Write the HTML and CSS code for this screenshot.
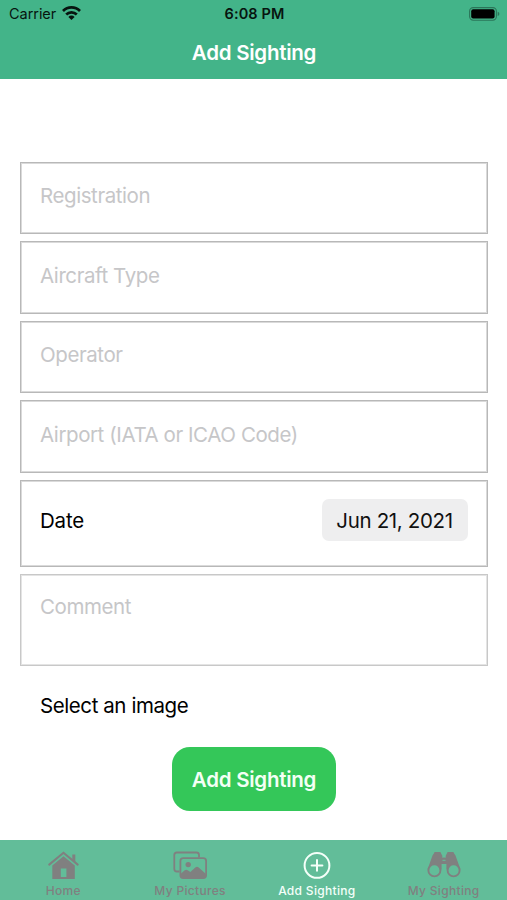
FILE: index.html
```html
<!DOCTYPE html>
<html lang="en">
<head>
<meta charset="utf-8">
<title>Add Sighting</title>
<link rel="stylesheet" href="styles.css">
</head>
<body>
<div class="screen">
  <header class="header">
    <div class="status">
      <div class="carrier"><span>Carrier</span>
        <svg class="wifi" viewBox="0 0 19 14"><g fill="none" stroke="#07140f" stroke-width="2.7"><path d="M1 5a12 12 0 0 1 17 0"/><path d="M4.200 8.500a7.500 7.500 0 0 1 10.600 0"/></g><path d="M9.500 13.900L6.400 10.900a4.300 4.300 0 0 1 6.200 0z" fill="#07140f"/></svg>
      </div>
      <div class="time">6:08 PM</div>
      <svg class="battery" viewBox="0 0 31 14"><rect x=".6" y=".6" width="26.8" height="12.6" rx="3.6" fill="none" stroke="#2b7559" stroke-width="1.1"/><rect x="2.2" y="2.2" width="23.4" height="9.4" rx="2" fill="#000"/><path d="M28.700 4.800q1.700.6 1.700 2.100t-1.700 2.100z" fill="#2b7559"/></svg>
    </div>
    <h1 class="title">Add Sighting</h1>
  </header>
  <main class="form">
    <div class="field">Registration</div>
    <div class="field">Aircraft Type</div>
    <div class="field">Operator</div>
    <div class="field">Airport (IATA or ICAO Code)</div>
    <div class="field date"><span class="label">Date</span><span class="chip">Jun 21, 2021</span></div>
    <div class="field comment">Comment</div>
    <div class="select">Select an image</div>
    <button class="submit">Add Sighting</button>
  </main>
  <nav class="tabs">
    <div class="tab">
      <svg viewBox="0 0 34 30"><path d="M3.200 14.600L17.500 2.800l14.200 11.800" fill="none" stroke="currentColor" stroke-width="2.100" stroke-linecap="round"/><path d="M26.300 4.400h3v8l-3-2.600z" fill="currentColor"/><path fill-rule="evenodd" d="M17.500 6.200l11.300 9.400V29H6.300V15.600zM14.800 18.500v8.500h5.600v-8.500z" fill="currentColor"/></svg>
      <span>Home</span>
    </div>
    <div class="tab">
      <svg viewBox="0 0 34 30"><g fill="none" stroke="currentColor" stroke-width="1.800"><path d="M6.500 21.500H3.800q-2.500 0-2.500-2.500V5q0-2.500 2.500-2.500h19.700q2.500 0 2.500 2.500v2.500"/><rect x="7.400" y="8.200" width="25.700" height="19.800" rx="2.800"/></g><circle cx="15.200" cy="14.600" r="2.700" fill="currentColor"/><path d="M8 28v-4.500l3.700-3.300q1.500-1 3 0l2.600 1.800 5-4.500q1.700-1.400 3.400 0l7.300 6.500v4z" fill="currentColor"/></svg>
      <span>My Pictures</span>
    </div>
    <div class="tab active">
      <svg viewBox="0 0 34 30"><g fill="none" stroke="currentColor" stroke-width="2" stroke-linecap="round"><circle cx="17" cy="15.400" r="12.400"/><path d="M17 10v10.800M11.600 15.400h10.800"/></g></svg>
      <span>Add Sighting</span>
    </div>
    <div class="tab">
      <svg viewBox="0 0 34 30"><path d="M7 3.200Q7 2 8.200 2h4.600q1.200 0 1.200 1.200l1.300 2.500v2q1.700-.6 3.400 0v-2L20 3.200Q20 2 21.200 2h4.600q1.200 0 1.200 1.200l1.500 2.300 5 14H19.400V14h-4.800v5.500H.5l5-14z" fill="currentColor"/><path d="M15.500 10.300h3" stroke="#62bd99" stroke-width="1"/><g fill="#62bd99" stroke="currentColor" stroke-width="1.900"><circle cx="7.400" cy="20.400" r="6"/><circle cx="26.600" cy="20.400" r="6"/></g></svg>
      <span>My Sighting</span>
    </div>
  </nav>
</div>
</body>
</html>
```
FILE: styles.css
```css
* { box-sizing: border-box; }
body { margin: 0; background: #fff; font-family: Inter, "Liberation Sans", sans-serif; }
.screen { width: 507px; height: 900px; display: flex; flex-direction: column; overflow: hidden; }
.header { height: 79.400px; flex: none; background: #43b489; }
.status { height: 27px; display: grid; grid-template-columns: 1fr auto 1fr; align-items: center; padding: 0 7px 0 9px; color: #07140f; }
.carrier { display: flex; align-items: center; gap: 6px; font-size: 14.500px; letter-spacing: -.05px; }
.wifi { width: 19px; height: 14px; margin-top: -1px; }
.time { font-size: 14.500px; font-weight: 600; letter-spacing: .1px; }
.battery { width: 31px; height: 14px; justify-self: end; }
.title { margin: 0; padding: 1px 0 0 1px; text-align: center; color: #fff; font-size: 20.500px; line-height: 50px; font-weight: 600; letter-spacing: -.25px; }
.form { flex: 1; display: flex; flex-direction: column; padding: 82.600px 19px 0 20px; font-size: 20.500px; letter-spacing: -.42px; }
.field { height: 72.500px; flex: none; margin-bottom: 6.900px; border: 1px solid #b8b8b8; box-shadow: inset 0 0 0 1px #dadada; padding: 20.500px 19px 0 19px; line-height: 26px; color: #c6c6c8; }
.date { height: 87.500px; display: flex; align-items: center; justify-content: space-between; padding: 0 19.500px 6px 19px; color: #000; letter-spacing: -.2px; }
.label { padding-top: 2px; }
.chip { width: 146px; height: 42px; line-height: 43px; border-radius: 7px; background: #eeeeef; text-align: center; color: #111; letter-spacing: -.35px; }
.comment { height: 92px; padding-top: 19px; border-color: #c8c8c8; box-shadow: inset 0 0 0 1px #e4e4e4; margin-bottom: 0; }
.select { margin: 26px 0 0 20px; line-height: 28px; color: #000; }
.submit { align-self: flex-start; width: 164px; height: 64px; margin: 27px 0 0 152px; padding: 1px 0 0; border: 0; border-radius: 18px; background: #34c759; color: #f3fff5; font: 600 20.500px Inter, sans-serif; letter-spacing: -.25px; }
.tabs { height: 60px; flex: none; display: grid; grid-template-columns: repeat(4, 1fr); background: #62bd99; }
.tab { display: flex; flex-direction: column; align-items: center; padding-top: 10px; color: #808080; font-size: 12px; line-height: 16px; font-weight: 500; letter-spacing: .32px; }
.tab svg { width: 34px; height: 30px; margin-bottom: 3px; }
.active { color: #f4fff9; }
```
